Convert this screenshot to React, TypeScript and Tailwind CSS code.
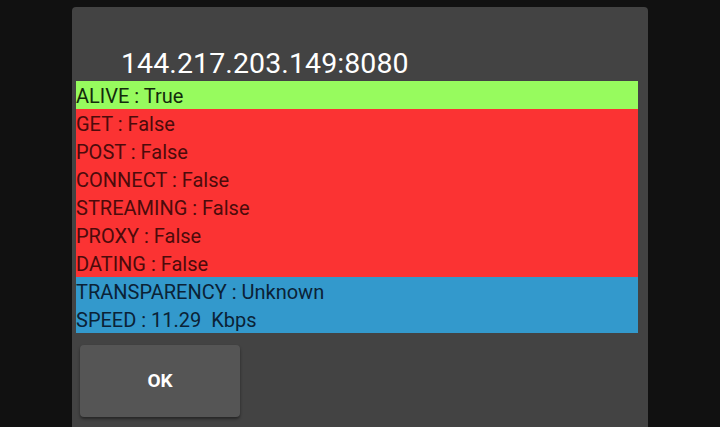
import React from 'react';

const rows = [
  { label: 'ALIVE : True', bg: 'bg-[#97fb5e]', fg: 'text-[#132a0c]' },
  { label: 'GET : False', bg: 'bg-[#fb3333]', fg: 'text-[#4c0b0b]' },
  { label: 'POST : False', bg: 'bg-[#fb3333]', fg: 'text-[#4c0b0b]' },
  { label: 'CONNECT : False', bg: 'bg-[#fb3333]', fg: 'text-[#4c0b0b]' },
  { label: 'STREAMING : False', bg: 'bg-[#fb3333]', fg: 'text-[#4c0b0b]' },
  { label: 'PROXY : False', bg: 'bg-[#fb3333]', fg: 'text-[#4c0b0b]' },
  { label: 'DATING : False', bg: 'bg-[#fb3333]', fg: 'text-[#4c0b0b]' },
  { label: 'TRANSPARENCY : Unknown', bg: 'bg-[#3399cc]', fg: 'text-[#0b2236]' },
  { label: 'SPEED : 11.29  Kbps', bg: 'bg-[#3399cc]', fg: 'text-[#0b2236]' },
];

export default function App() {
  return (
    <div className="w-[720px] h-[427px] overflow-hidden bg-[#111111] pt-[7px] pl-[72px] font-['Roboto',sans-serif]">
      <div className="w-[576px] h-[430px] rounded-t-[4px] bg-[#434343] pl-[4px] pr-[10px]">
        <div className="h-[74px] flex items-end pl-[45px]">
          <span className="text-[28.5px] leading-[34px] text-white tracking-[0.1px]">144.217.203.149:8080</span>
        </div>
        <div className="flex flex-col">
          {rows.map((r) => (
            <div key={r.label} className={`h-[28px] ${r.bg} ${r.fg} text-[20px] leading-[28px] pt-[1px] whitespace-pre`}>
              {r.label}
            </div>
          ))}
        </div>
        <div className="pt-[12px] pl-[4px]">
          <button className="w-[160px] h-[72px] rounded-[4px] bg-[#555555] shadow-[0_2px_3px_rgba(0,0,0,0.45)] text-white text-[19px] font-bold">
            OK
          </button>
        </div>
      </div>
    </div>
  );
}
